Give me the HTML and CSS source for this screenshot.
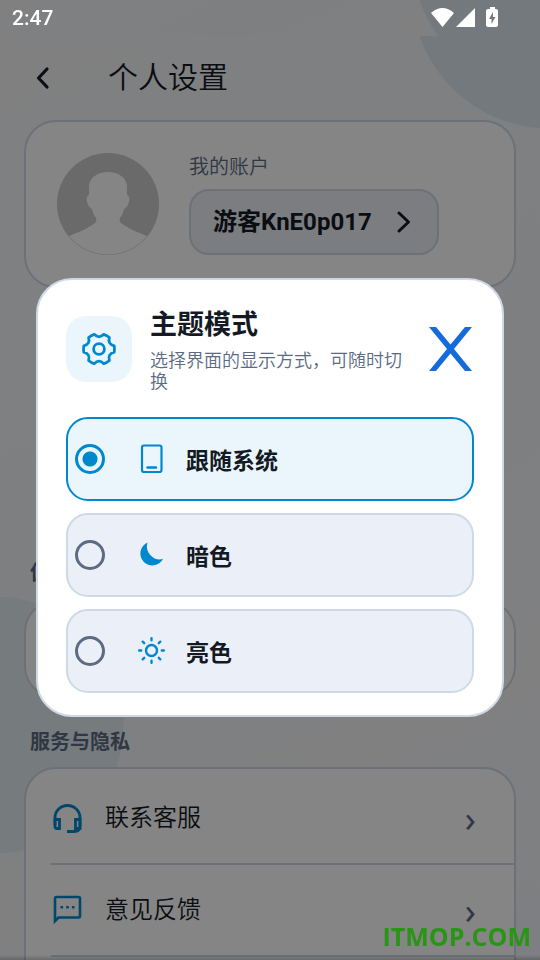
FILE: index.html
```html
<!DOCTYPE html>
<html lang="zh-CN">
<head>
<meta charset="utf-8">
<meta name="viewport" content="width=device-width, initial-scale=1">
<title>个人设置</title>
<link rel="stylesheet" href="styles.css">
</head>
<body>
<div class="status-backdrop backdrop"></div>
<main class="page backdrop">
  <header class="topbar">
    <button class="back" type="button" aria-label="返回">
      <svg width="16" height="24" viewBox="0 0 16 24"><path d="M12 3 3.500 12 12 21" fill="none" stroke="currentColor" stroke-width="3.200" stroke-linecap="round" stroke-linejoin="round"/></svg>
    </button>
    <h1>个人设置</h1>
  </header>

  <section class="card account">
    <svg class="avatar" viewBox="0 0 102 102" aria-hidden="true">
      <circle cx="51" cy="51" r="51" fill="#cbcbcb"/>
      <path d="M12 83C22 79 32 75 38 70Q40 68 39 65Q36 61 35 56Q32 55 30 49Q29 43 32 42V33C33 24 41 19 51 19S69 24 70 33V42Q73 43 72 49Q70 55 67 56Q66 61 63 65Q62 68 64 70C70 75 80 79 90 83A50.500 50.500 0 0 1 12 83Z" fill="#fff"/>
    </svg>
    <div class="account-info">
      <span class="account-label">我的账户</span>
      <button class="account-name" type="button">游客KnE0p017
        <svg width="16" height="24" viewBox="0 0 16 24"><path d="M4 3 13.500 12 4 21" fill="none" stroke="currentColor" stroke-width="3" stroke-linecap="round" stroke-linejoin="round"/></svg>
      </button>
    </div>
  </section>

  <h2 class="preferences-title">偏好设置</h2>
  <section class="card preferences"></section>

  <h2>服务与隐私</h2>
  <nav class="card services">
    <a class="row" href="#support">
      <svg class="row-icon" viewBox="0 0 32 32" aria-hidden="true"><g fill="none" stroke="currentColor" stroke-width="2.800"><path d="M4 23V15.500a12.500 12 0 0 1 25 0v9q0 5-6 5H16"/><path d="M4 17.500h4.500v9H6q-2 0-2-2zM29 17.500h-4.500v9H29z"/></g></svg>
      <span>联系客服</span><span class="chevron">›</span>
    </a>
    <a class="row" href="#feedback">
      <svg class="row-icon" viewBox="0 0 32 32" aria-hidden="true"><path d="M4 27V4.500Q4 3 5.500 3H27.500Q29 3 29 4.500V22Q29 23.500 27.500 23.500H7.500Z" fill="none" stroke="currentColor" stroke-width="2.600"/><path d="M9.500 12h2.600v2.600H9.500zM15.200 12h2.600v2.600h-2.600zM20.900 12h2.600v2.600h-2.600z" fill="currentColor"/></svg>
      <span>意见反馈</span><span class="chevron">›</span>
    </a>
  </nav>
</main>

<div class="scrim">
  <form class="dialog" role="dialog" aria-labelledby="dialog-title">
    <header class="dialog-head">
      <div class="tile">
        <svg width="36" height="36" viewBox="-18 -18 36 36" aria-hidden="true"><g fill="none" stroke="currentColor" stroke-width="2.800" stroke-linejoin="round"><circle r="5.400"/><path d="M15.200-3.200Q15.800 0 15.200 3.200Q8.400 4.900 10.400 11.500Q7.900 13.700 4.800 14.700Q0 9.700-4.800 14.700Q-7.900 13.700-10.400 11.500Q-8.400 4.900-15.200 3.200Q-15.800 0-15.200-3.200Q-8.400-4.900-10.400-11.500Q-7.900-13.700-4.800-14.700Q0-9.700 4.800-14.700Q7.900-13.700 10.400-11.500Q8.400-4.900 15.200-3.200Z"/></g></svg>
      </div>
      <div class="dialog-text">
        <h2 id="dialog-title">主题模式</h2>
        <p>选择界面的显示方式，可随时切换</p>
      </div>
      <button class="close" type="button" aria-label="关闭">
        <svg width="44" height="44" viewBox="0 0 44 44"><path d="M0 0H7L21.500 17.500 36 0H43L25 22 43 44H36L21.500 26.500 7 44H0L18 22Z" fill="currentColor"/></svg>
      </button>
    </header>
    <div class="options">
      <label class="option">
        <input type="radio" name="theme" checked>
        <svg class="option-icon" viewBox="0 0 32 32" aria-hidden="true"><rect x="7" y="2.500" width="19.500" height="26.500" rx="2" fill="none" stroke="currentColor" stroke-width="2.200"/><path d="M12.500 24.500h8.500" stroke="currentColor" stroke-width="2.400" stroke-linecap="round"/></svg>
        <span>跟随系统</span>
      </label>
      <label class="option">
        <input type="radio" name="theme">
        <svg class="option-icon" viewBox="0 0 32 32" aria-hidden="true"><path d="M12.500 3.500A13 13 0 0 0 28 20A12 12 0 1 1 12.500 3.500Z" fill="currentColor"/></svg>
        <span>暗色</span>
      </label>
      <label class="option">
        <input type="radio" name="theme">
        <svg class="option-icon" viewBox="-16.500 -15.500 32 32" aria-hidden="true"><g fill="none" stroke="currentColor" stroke-width="2.400" stroke-linecap="round"><circle r="5.500"/><path d="M0-10.300v-2M0 10.300v2M-10.300 0h-2M10.300 0h2M-7.300-7.300l-1.500-1.500M7.300-7.300l1.500-1.500M-7.300 7.300l-1.500 1.500M7.300 7.300l1.500 1.500"/></g></svg>
        <span>亮色</span>
      </label>
    </div>
  </form>
</div>

<div class="statusbar">
  <time>2:47</time>
  <svg width="68" height="20" viewBox="0 0 68 20" aria-hidden="true"><path d="M0 5Q11.500-5 23 5L11.500 19ZM25 19 44 0V19ZM57 1H59V-1H64V1H65Q67 1 67 3V17Q67 19 65 19H57Q55 19 55 17V3Q55 1 57 1Z" fill="#fff"/><path d="M62 4 58 11H60.500V16L64.500 9H62Z" fill="#737a7f"/></svg>
</div>
<div class="watermark">ITMOP.COM</div>
</body>
</html>
```
FILE: styles.css
```css
:root {
  --accent: #0088cf;
  --ink: #141a24;
  --muted: #5b6b82;
  --line: #cfd9e6;
  --fill: #ebeff8;
  --tint: #eaf6fb;
  --status: 36px;
}

* { box-sizing: border-box; }

body {
  margin: 0;
  height: 100vh;
  overflow: hidden;
  display: flex;
  flex-direction: column;
  color: var(--ink);
  font-family: Roboto, "Noto Sans CJK SC", sans-serif;
  font-weight: 350;
  line-height: 1.25;
}

h1, h2, p { margin: 0; }

button {
  font: inherit;
  color: inherit;
  background: none;
  border: 0;
  padding: 0;
}

svg { display: block; flex: none; overflow: visible; }

.backdrop {
  background:
    radial-gradient(circle at calc(100% + 10px) -46px, #dce9ee 138px, transparent 139px),
    radial-gradient(circle at -5px 689px, #e2ebf0 128px, transparent 129px),
    linear-gradient(155deg, #f5f6f8, #f2f4f8 50%, #f5f6f8 75%, #f2f4f9);
}

.status-backdrop { flex: none; height: var(--status); }

.page {
  flex: 1;
  min-height: 0;
  overflow: hidden;
  padding: 0 24px;
}

.topbar {
  display: flex;
  align-items: center;
  gap: 57px;
  height: 84px;
  padding-left: 11px;
}

.back { display: flex; justify-content: center; width: 16px; }

h1 { font-size: 30px; font-weight: inherit; line-height: 40px; }

.card {
  background: #fff;
  border: 2px solid var(--line);
  border-radius: 32px;
}

.account {
  display: flex;
  align-items: center;
  gap: 30px;
  height: 168px;
  padding: 0 31px;
}

.avatar { width: 102px; height: 102px; }

.account-info {
  display: flex;
  flex-direction: column;
  align-items: flex-start;
  gap: 8px;
}

.account-label { font-size: 20px; line-height: 28px; color: var(--muted); }

.account-name {
  display: flex;
  align-items: center;
  gap: 23px;
  height: 66px;
  padding: 0 26px 0 22px;
  background: var(--fill);
  border: 2px solid var(--line);
  border-radius: 20px;
  font-size: 24px;
  font-weight: 700;
}

.page h2 {
  padding: 0 6px;
  font-size: 20px;
  line-height: 30px;
  font-weight: 700;
  color: var(--muted);
}

.page .preferences-title { margin-top: 270px; }

.preferences { height: 98px; margin: 12px 0 29px; }

.services { margin-top: 10px; padding: 4px 0 40px 25px; }

.row {
  display: flex;
  align-items: center;
  gap: 22px;
  height: 92px;
  padding-right: 38px;
  border-bottom: 2px solid var(--line);
  color: inherit;
  font-size: 24px;
  line-height: 32px;
  text-decoration: none;
}

.row-icon { width: 32px; height: 32px; color: var(--accent); }

.chevron {
  margin-left: auto;
  font-family: "Noto Sans", sans-serif;
  font-size: 36px;
  line-height: 45px;
  font-weight: 400;
  color: var(--muted);
}

.scrim {
  position: fixed;
  inset: 0;
  display: flex;
  align-items: center;
  padding: var(--status) 36px 2px;
  background: linear-gradient(transparent calc(100% - 5px), rgb(0 0 0 / 20%)), rgb(0 0 0 / 48%);
}

.dialog {
  flex: 1;
  padding: 26px 28px 22px;
  background: #fff;
  border: 2px solid var(--line);
  border-radius: 36px;
}

.dialog-head {
  display: flex;
  align-items: center;
  gap: 18px;
}

.tile {
  display: grid;
  place-items: center;
  flex: none;
  width: 66px;
  height: 66px;
  border-radius: 20px;
  background: var(--tint);
  color: var(--accent);
}

.dialog-text { flex: 1; }

.dialog-text h2 { font-size: 27px; line-height: 38px; font-weight: 700; }

.dialog-text p {
  margin-top: 6px;
  font-size: 18px;
  line-height: 21px;
  color: var(--muted);
}

.close { padding-right: 1px; color: #166bdc; }

.options {
  display: flex;
  flex-direction: column;
  gap: 12px;
  margin-top: 25px;
}

.option {
  display: flex;
  align-items: center;
  height: 84px;
  padding: 0 7px;
  background: var(--fill);
  border: 2px solid var(--line);
  border-radius: 22px;
  font-family: "Noto Sans CJK SC", sans-serif;
  font-size: 23px;
  line-height: 32px;
  font-weight: 700;
}

.option:has(:checked) { background: var(--tint); border-color: var(--accent); }

.option input {
  appearance: none;
  flex: none;
  width: 30px;
  height: 30px;
  margin: 0 30px 0 0;
  border: 3px solid var(--muted);
  border-radius: 50%;
}

.option input:checked {
  border-color: var(--accent);
  background: radial-gradient(circle, var(--accent) 7px, transparent 8px);
}

.option-icon { width: 32px; height: 32px; margin-right: 19px; color: var(--accent); }

.statusbar {
  position: fixed;
  inset: 0 0 auto;
  display: flex;
  align-items: center;
  justify-content: space-between;
  height: var(--status);
  padding: 0 41px 0 12px;
  color: #fff;
  font-size: 21px;
  font-weight: 500;
}

.watermark {
  position: fixed;
  right: 9px;
  bottom: 7px;
  color: #289514;
  font: 700 25px/34px "Open Sans", sans-serif;
}
```
